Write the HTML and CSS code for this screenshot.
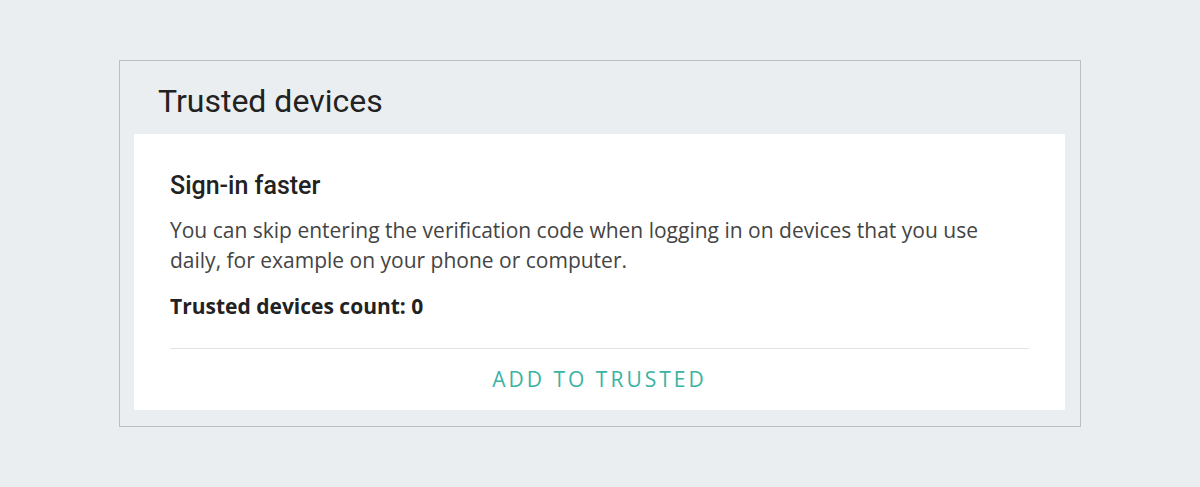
FILE: index.html
```html
<!DOCTYPE html>
<html lang="en">
<head>
    <meta charset="UTF-8">
    <meta name="viewport" content="width=device-width, initial-scale=1.0">
    <title>Trusted devices</title>
    <link rel="stylesheet" href="styles.css">
</head>
<body>

    <div class="panel">
        <h1 class="panel-title">Trusted devices</h1>

        <div class="card">
            <h2>Sign-in faster</h2>
            <p class="description">You can skip entering the verification code when logging in on devices that you use daily, for example on your phone or computer.</p>
            <p class="count">Trusted devices count: 0</p>

            <div class="actions">
                <button type="button" class="link-button">Add to trusted</button>
            </div>
        </div>
    </div>

</body>
</html>
```

FILE: styles.css
```css
body {
    font-family: 'Open Sans', sans-serif;
    background-color: #ebeef1;
    margin: 0;
    padding: 60px 0;
}

.panel {
    width: 962px;
    margin: 0 auto;
    border: 1px solid #bfbfbf;
    box-sizing: border-box;
    padding: 0 15px 16px 14px;
}

.panel-title {
    font-family: 'Roboto', sans-serif;
    font-weight: 400;
    font-size: 32px;
    line-height: 40px;
    color: #222;
    margin: 0;
    padding: 20px 0 13px 24px;
}

.card {
    background-color: #fff;
    padding: 37px 36px 0;
    height: 276px;
    box-sizing: border-box;
}

.card h2 {
    font-family: 'Roboto', sans-serif;
    font-weight: 500;
    font-size: 25px;
    line-height: 30px;
    color: #222;
    margin: 0 0 14px;
}

.description {
    font-size: 21px;
    line-height: 30px;
    color: #444;
    margin: 0 0 17px;
}

.count {
    font-size: 21px;
    line-height: 28px;
    font-weight: 700;
    color: #222;
    margin: 0 0 28px;
}

.actions {
    border-top: 1px solid #e3e3e3;
    text-align: center;
    padding-top: 16px;
    line-height: 28px;
}

.link-button {
    display: inline-block;
    vertical-align: top;
    background: none;
    border: none;
    padding: 0;
    font-family: 'Open Sans', sans-serif;
    font-size: 21px;
    line-height: 28px;
    letter-spacing: 3px;
    text-transform: uppercase;
    color: #3bb3a3;
    cursor: pointer;
}
```
